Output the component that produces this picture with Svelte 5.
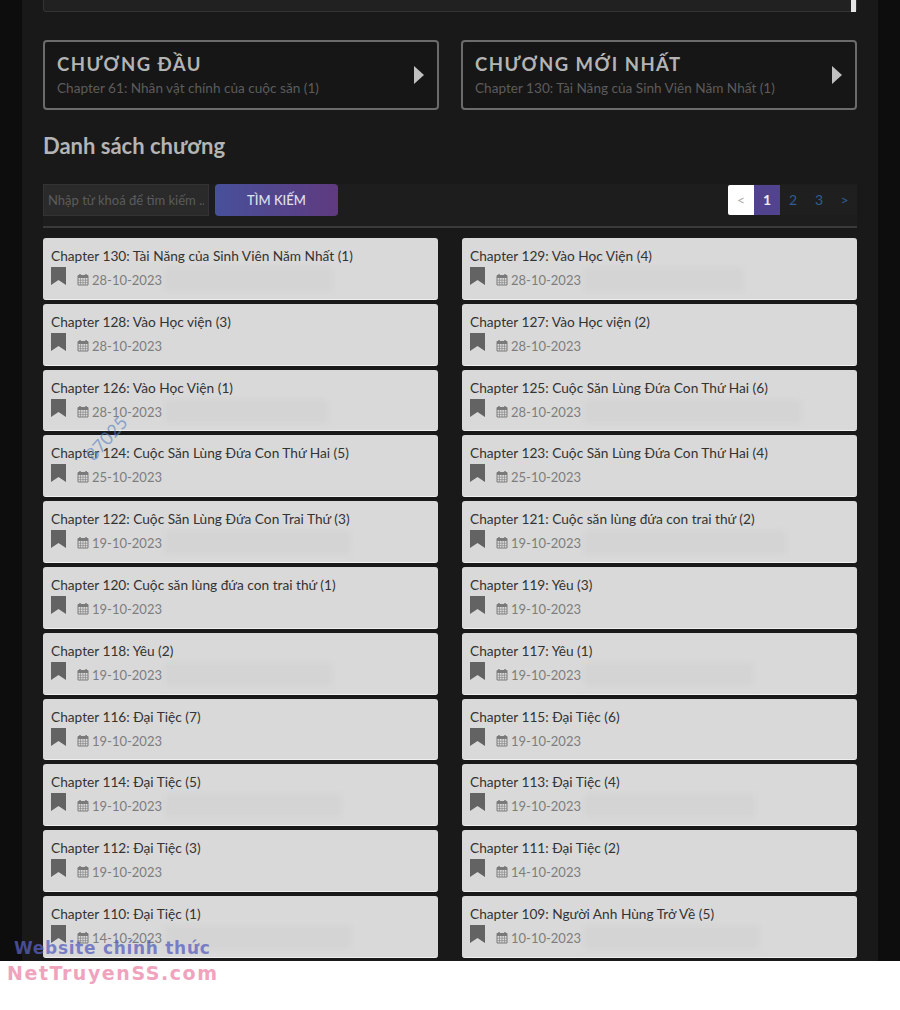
<script>
	const chapters = [
		{ t: 'Chapter 130: Tài Năng của Sinh Viên Năm Nhất (1)', d: '28-10-2023', s: 167 },
		{ t: 'Chapter 129: Vào Học Viện (4)', d: '28-10-2023', s: 159 },
		{ t: 'Chapter 128: Vào Học viện (3)', d: '28-10-2023', s: 0 },
		{ t: 'Chapter 127: Vào Học viện (2)', d: '28-10-2023', s: 0 },
		{ t: 'Chapter 126: Vào Học Viện (1)', d: '28-10-2023', s: 163 },
		{ t: 'Chapter 125: Cuộc Săn Lùng Đứa Con Thứ Hai (6)', d: '28-10-2023', s: 217 },
		{ t: 'Chapter 124: Cuộc Săn Lùng Đứa Con Thứ Hai (5)', d: '25-10-2023', s: 0 },
		{ t: 'Chapter 123: Cuộc Săn Lùng Đứa Con Thứ Hai (4)', d: '25-10-2023', s: 0 },
		{ t: 'Chapter 122: Cuộc Săn Lùng Đứa Con Trai Thứ (3)', d: '19-10-2023', s: 185 },
		{ t: 'Chapter 121: Cuộc săn lùng đứa con trai thứ (2)', d: '19-10-2023', s: 202 },
		{ t: 'Chapter 120: Cuộc săn lùng đứa con trai thứ (1)', d: '19-10-2023', s: 0 },
		{ t: 'Chapter 119: Yêu (3)', d: '19-10-2023', s: 0 },
		{ t: 'Chapter 118: Yêu (2)', d: '19-10-2023', s: 167 },
		{ t: 'Chapter 117: Yêu (1)', d: '19-10-2023', s: 169 },
		{ t: 'Chapter 116: Đại Tiệc (7)', d: '19-10-2023', s: 0 },
		{ t: 'Chapter 115: Đại Tiệc (6)', d: '19-10-2023', s: 0 },
		{ t: 'Chapter 114: Đại Tiệc (5)', d: '19-10-2023', s: 176 },
		{ t: 'Chapter 113: Đại Tiệc (4)', d: '19-10-2023', s: 171 },
		{ t: 'Chapter 112: Đại Tiệc (3)', d: '19-10-2023', s: 0 },
		{ t: 'Chapter 111: Đại Tiệc (2)', d: '14-10-2023', s: 0 },
		{ t: 'Chapter 110: Đại Tiệc (1)', d: '14-10-2023', s: 186 },
		{ t: 'Chapter 109: Người Anh Hùng Trở Về (5)', d: '10-10-2023', s: 175 }
	];
</script>

<div class="page">
	<div class="wrap">
		<div class="top-box"><span class="scroll"></span></div>

		<div class="jump">
			<a class="jump-card" href="#first">
				<div>
					<div class="jump-title">CHƯƠNG ĐẦU</div>
					<div class="jump-sub">Chapter 61: Nhân vật chính của cuộc săn (1)</div>
				</div>
				<span class="arrow"></span>
			</a>
			<a class="jump-card" href="#last">
				<div>
					<div class="jump-title">CHƯƠNG MỚI NHẤT</div>
					<div class="jump-sub">Chapter 130: Tài Năng của Sinh Viên Năm Nhất (1)</div>
				</div>
				<span class="arrow"></span>
			</a>
		</div>

		<h2>Danh sách chương</h2>

		<div class="toolbar">
			<input placeholder="Nhập từ khoá để tìm kiếm ..." />
			<button>TÌM KIẾM</button>
			<div class="pager">
				<span class="prev">&lt;</span>
				<span class="current">1</span>
				<span>2</span>
				<span>3</span>
				<span class="next">&gt;</span>
			</div>
		</div>

		<div class="list">
			{#each chapters as c}
				<div class="item">
					<div class="name">{c.t}</div>
					<div class="meta">
						<svg class="mark" viewBox="0 0 15 18" width="15" height="18">
							<path d="M0 0H15V18L7.5 13L0 18Z" fill="#636363" />
						</svg>
						<svg class="cal" viewBox="0 0 12 13" width="12" height="13">
							<path d="M1 2.5H11V12H1Z" fill="none" stroke="#7a7a7a" />
							<path d="M1 2.5H11V5H1Z" fill="#7a7a7a" />
							<path d="M3 1V3M9 1V3" stroke="#7a7a7a" stroke-width="1.5" />
							<path d="M1 7.2H11M1 9.6H11M3.5 5V12M6 5V12M8.5 5V12" stroke="#8a8a8a" stroke-width="0.7" />
						</svg>
						<span class="date">{c.d}</span>
						{#if c.s}
							<span class="smudge" style="width: {c.s}px"></span>
						{/if}
					</div>
				</div>
			{/each}
		</div>
	</div>

	<span class="stamp">87025</span>
</div>

<div class="footer"></div>

<div class="watermark">
	<div class="wm-top">Website chính thức</div>
	<div class="wm-bottom">NetTruyenSS.com</div>
</div>

<style>
	:global(body) {
		margin: 0;
		background: #fff;
		font-family: 'Lato', 'Open Sans', sans-serif;
	}

	.page {
		position: relative;
		height: 961px;
		background: #0d0d0d;
		overflow: hidden;
	}

	.wrap {
		width: 814px;
		height: 961px;
		margin: 0 22px;
		padding: 0 21px;
		background: #191919;
		box-sizing: content-box;
	}

	.top-box {
		position: relative;
		height: 11px;
		background: #212121;
		border: 1px solid #333;
		border-top: 0;
		border-radius: 0 0 3px 3px;
	}

	.scroll {
		position: absolute;
		top: 0;
		right: 0;
		width: 5px;
		height: 12px;
		background: #e4e4e4;
	}

	.jump {
		display: grid;
		grid-template-columns: 396px 396px;
		gap: 22px;
		margin-top: 28px;
	}

	.jump-card {
		display: flex;
		justify-content: space-between;
		align-items: center;
		height: 70px;
		padding: 0 14px 0 12px;
		box-sizing: border-box;
		border: 2px solid #6b6b6b;
		border-radius: 4px;
		text-decoration: none;
		background: #161616;
	}

	.jump-title {
		margin-top: -2px;
		font-size: 18.5px;
		line-height: 24px;
		font-weight: 700;
		letter-spacing: 1.45px;
		color: #b4b4b4;
	}

	.jump-sub {
		margin-top: 3px;
		font-size: 13.6px;
		line-height: 18px;
		color: #5c5c5c;
	}

	.arrow {
		width: 0;
		height: 0;
		margin-right: -1px;
		border-left: 10px solid #c0c0c0;
		border-top: 9px solid transparent;
		border-bottom: 9px solid transparent;
	}

	h2 {
		margin: 21px 0 0;
		height: 32px;
		font-size: 22px;
		line-height: 30px;
		font-weight: 700;
		color: #b4b4b4;
	}

	.toolbar {
		display: flex;
		align-items: flex-start;
		gap: 6px;
		height: 41px;
		margin-top: 21px;
		padding-bottom: 1px;
		background: #1d1d1d;
		border-bottom: 2px solid #3a3a3a;
	}

	input {
		width: 166px;
		height: 32px;
		padding: 0 4px;
		box-sizing: border-box;
		background: #2a2a2a;
		border: 1px solid #333;
		font: 13px 'Lato', sans-serif;
		color: #666;
	}

	input::placeholder {
		color: #5c5c5c;
	}

	button {
		width: 123px;
		height: 32px;
		border: 0;
		border-radius: 4px;
		background: linear-gradient(90deg, #47509a, #5f3a80);
		color: #dfe0ee;
		font: 500 13px 'Lato', sans-serif;
	}

	.pager {
		display: flex;
		margin: 1px 0 0 auto;
	}

	.pager span {
		width: 26px;
		height: 30px;
		line-height: 30px;
		text-align: center;
		font-size: 14px;
		color: #2f5d94;
		background: #1f1f1f;
	}

	.pager .prev {
		background: #fff;
		color: #aaa;
		border-radius: 2px 0 0 2px;
	}

	.pager .current {
		background: #52438f;
		color: #eee;
		font-weight: 700;
	}

	.pager .next {
		width: 25px;
	}

	.list {
		display: grid;
		grid-template-columns: 395px 395px;
		column-gap: 24px;
		grid-auto-rows: 61.8px;
		row-gap: 4px;
		margin-top: 10px;
	}

	.item {
		padding: 8px 8px 0;
		box-sizing: border-box;
		background: #d9d9d9;
		border-radius: 3px;
		border-bottom: 1px solid #efefef;
	}

	.name {
		font-size: 13.7px;
		line-height: 20px;
		color: #333;
		white-space: nowrap;
	}

	.meta {
		display: flex;
		align-items: flex-start;
		position: relative;
	}

	.mark {
		flex: none;
		margin-top: 1px;
	}

	.cal {
		flex: none;
		margin: 7px 3px 0 11px;
	}

	.date {
		margin-top: 4px;
		font-size: 13px;
		line-height: 20px;
		color: #7d7d7d;
	}

	.smudge {
		margin: 2px 0 0 3px;
		height: 23px;
		background: #d4d4d4;
		filter: blur(2px);
	}

	.stamp {
		position: absolute;
		left: 80px;
		top: 427px;
		font-size: 18px;
		color: rgba(90, 130, 195, 0.65);
		transform: rotate(-48deg);
		transform-origin: center;
	}

	.footer {
		height: 49px;
	}

	.watermark {
		position: absolute;
		left: 7px;
		top: 936px;
		font-family: 'DejaVu Sans', sans-serif;
		font-weight: 700;
		line-height: 25px;
	}

	.wm-top {
		margin-left: 7px;
		font-size: 17px;
		letter-spacing: 0.7px;
		color: rgba(90, 95, 190, 0.75);
	}

	.wm-bottom {
		font-size: 19px;
		letter-spacing: 1.55px;
		color: #f0a3bd;
	}
</style>
